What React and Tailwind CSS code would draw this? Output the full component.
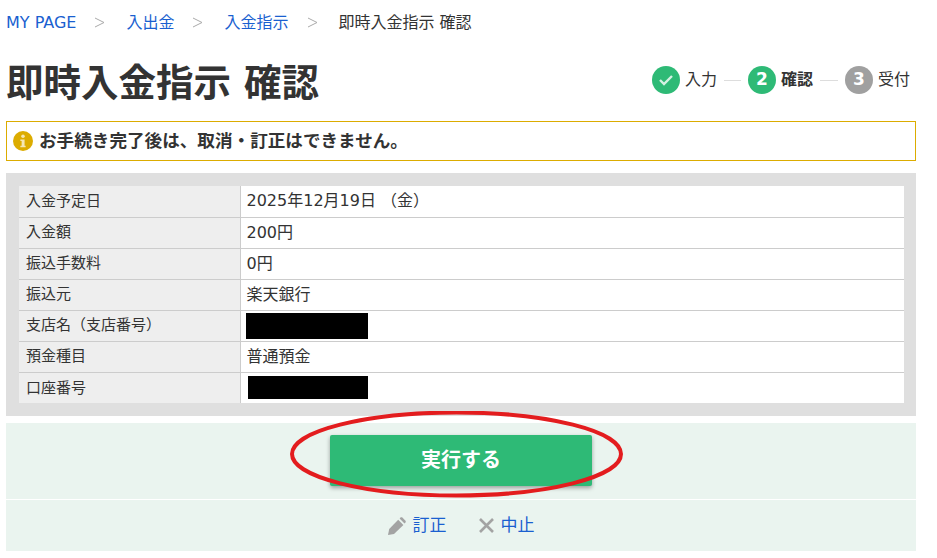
const FONT = '[font-family:"DejaVu_Sans","Noto_Sans_CJK_JP",sans-serif]';

const rows = [
    ['入金予定日', '2025年12月19日 （金）'],
    ['入金額', '200円'],
    ['振込手数料', '0円'],
    ['振込元', '楽天銀行'],
    ['支店名（支店番号）', null, 'w-[122px] h-[26px] -ml-px'],
    ['預金種目', '普通預金'],
    ['口座番号', null, 'w-[120px] h-[23px] ml-px'],
];

export default function App() {
    return (
        <div className={`${FONT} w-[937px] h-[558px] bg-white text-[#333] overflow-hidden`}>
            <div className="w-[910px] ml-[6px]">
                <nav className="flex items-center h-[45px] text-[16px] leading-[45px]">
                    <a className="text-[#1a5fd0]">MY PAGE</a>
                    <Chevron />
                    <a className="text-[#1a5fd0]">入出金</a>
                    <Chevron />
                    <a className="text-[#1a5fd0]">入金指示</a>
                    <Chevron />
                    <span>即時入金指示 確認</span>
                </nav>

                <div className="flex items-center justify-between h-[76px]">
                    <h1 className="text-[37.5px] leading-[76px] font-bold whitespace-nowrap">即時入金指示 確認</h1>
                    <Steps />
                </div>

                <div className="flex items-center h-[40px] border border-[#dcac00] pl-[6px] gap-[6px]">
                    <InfoIcon />
                    <span className="text-[17.6px] font-bold whitespace-nowrap">お手続き完了後は、取消・訂正はできません。</span>
                </div>

                <div className="mt-[12px] bg-[#dfdfdf] p-[13px] pr-[12px]">
                    <table className="w-full border-collapse bg-white">
                        <tbody>
                            {rows.map(([label, value, mask], i) => (
                                <tr key={label} className={`h-[31px] ${i < rows.length - 1 ? 'border-b border-[#cccccc]' : ''}`}>
                                    <th className="w-[221px] bg-[#eeeeee] border-r border-[#cccccc] pl-[7px] text-[15px] font-normal text-left whitespace-nowrap">{label}</th>
                                    <td className="pl-[6px] text-[16px]">
                                        {value ?? <div className={`bg-black ${mask}`} />}
                                    </td>
                                </tr>
                            ))}
                        </tbody>
                    </table>
                </div>

                <div className="relative mt-[7px] bg-[#eaf4ef]">
                    <div className="flex justify-center h-[76px] pt-[12px]">
                        <button type="button" className="w-[262px] h-[51px] pb-[2px] bg-[#2eba76] rounded-[2px] text-white text-[20px] font-bold shadow-[0_2px_4px_rgba(0,0,0,0.35)]">
                            実行する
                        </button>
                    </div>
                    <div className="flex justify-center items-center gap-[31px] h-[52px] border-t border-white text-[17px] text-[#1a5fd0]">
                        <a className="flex items-center gap-[7px]"><PencilIcon />訂正</a>
                        <a className="flex items-center gap-[6px]"><CloseIcon />中止</a>
                    </div>
                    <svg className="absolute left-[284px] top-[-12px] pointer-events-none" width="333" height="87" viewBox="0 0 333 87" fill="none">
                        <ellipse cx="166.5" cy="43" rx="164.5" ry="41.5" stroke="#e31c1e" strokeWidth="4" />
                    </svg>
                </div>
            </div>
        </div>
    );
}

function Chevron() {
    return (
        <svg className="ml-[18px] mr-[21px]" width="11" height="11" viewBox="0 0 11 11" fill="none" stroke="#aaaaaa" strokeWidth="1">
            <path d="M1 1l9 4.5L1 10" />
        </svg>
    );
}

function Steps() {
    return (
        <div className="flex items-center text-[16px] mr-[6px] mb-[6px]">
            <Circle bg="bg-[#2eba76]">
                <svg width="16" height="12" viewBox="0 0 16 12" fill="none" stroke="#d5f1e3" strokeWidth="2.4"><path d="M2 6l4 4 8-8" /></svg>
            </Circle>
            <span className="ml-[5px]">入力</span>
            <Line />
            <Circle bg="bg-[#2eba76]"><span className="text-white text-[17px] font-bold">2</span></Circle>
            <span className="ml-[5px] font-bold">確認</span>
            <div className="w-[18px] h-px bg-[#dddddd] mx-[7px]" />
            <Circle bg="bg-[#a0a0a0]"><span className="text-white text-[17px] font-bold">3</span></Circle>
            <span className="ml-[5px]">受付</span>
        </div>
    );
}

function Circle({ bg, children }) {
    return <div className={`flex items-center justify-center w-[28px] h-[28px] rounded-full ${bg}`}>{children}</div>;
}

function Line() {
    return <div className="w-[17px] h-px bg-[#dddddd] mx-[7px]" />;
}

function InfoIcon() {
    return (
        <svg width="20" height="20" viewBox="0 0 19 19">
            <circle cx="9.5" cy="9.5" r="9.5" fill="#dcac00" />
            <circle cx="9.5" cy="5" r="1.7" fill="#f5e7b5" />
            <path d="M7 8h4v6h1v1.5H7V14h1.2V9.5H7z" fill="#f5e7b5" />
        </svg>
    );
}

function PencilIcon() {
    return (
        <svg width="18" height="18" viewBox="0 0 18 18" fill="#a3a3a3">
            <path d="M0 18L1.2 12 10.2 2.8 15.4 8 6 17z" />
            <path d="M11.6 1.4L12.6.5c.5-.4 1.2-.4 1.7 0l3.2 3.2c.4.5.4 1.2 0 1.7l-1 1z" />
        </svg>
    );
}

function CloseIcon() {
    return (
        <svg width="17" height="17" viewBox="0 0 17 17" fill="none" stroke="#a3a3a3" strokeWidth="2.6">
            <path d="M2 2l13 13M15 2L2 15" />
        </svg>
    );
}
